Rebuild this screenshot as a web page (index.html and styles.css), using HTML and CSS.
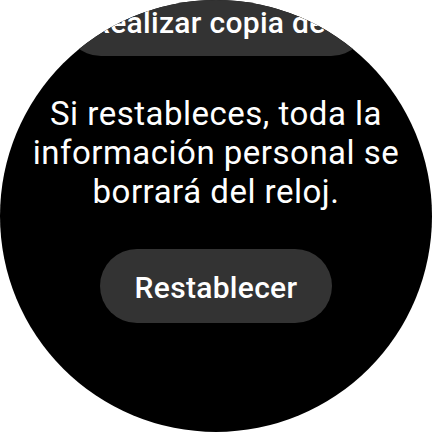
FILE: index.html
```html
<!DOCTYPE html>
<html lang="es">
<head>
<meta charset="utf-8">
<link rel="stylesheet" href="styles.css">
</head>
<body>
<div class="watch">
  <div class="chip"><span class="chip-label">Realizar copia de seguridad</span></div>
  <p class="message">Si restableces, toda la<br>información personal se<br>borrará del reloj.</p>
  <div class="button">Restablecer</div>
</div>
</body>
</html>
```

FILE: styles.css
```css
html, body {
  margin: 0;
  padding: 0;
  background: #ffffff;
}
.watch {
  width: 432px;
  height: 432px;
  border-radius: 50%;
  overflow: hidden;
  background: #000000;
  display: flex;
  flex-direction: column;
  align-items: center;
  font-family: Roboto, "Noto Sans", sans-serif;
  color: #ffffff;
}
.chip {
  margin-top: -18px;
  width: 304px;
  height: 74px;
  flex: none;
  box-sizing: border-box;
  border-radius: 37px;
  background: #333333;
  display: flex;
  align-items: center;
  padding: 6px 0 0 27px;
  overflow: hidden;
  white-space: nowrap;
}
.chip-label {
  font-size: 30px;
  font-weight: 500;
  letter-spacing: 0.3px;
}
.message {
  margin: 38px 0 0 0;
  font-size: 33px;
  line-height: 39px;
  letter-spacing: 0.5px;
  text-align: center;
  white-space: nowrap;
}
.button {
  margin-top: 38px;
  width: 232px;
  height: 74px;
  flex: none;
  box-sizing: border-box;
  border-radius: 37px;
  background: #333333;
  display: flex;
  align-items: center;
  justify-content: center;
  padding-top: 2px;
  font-size: 30px;
  font-weight: 500;
  letter-spacing: 0.3px;
}
```
